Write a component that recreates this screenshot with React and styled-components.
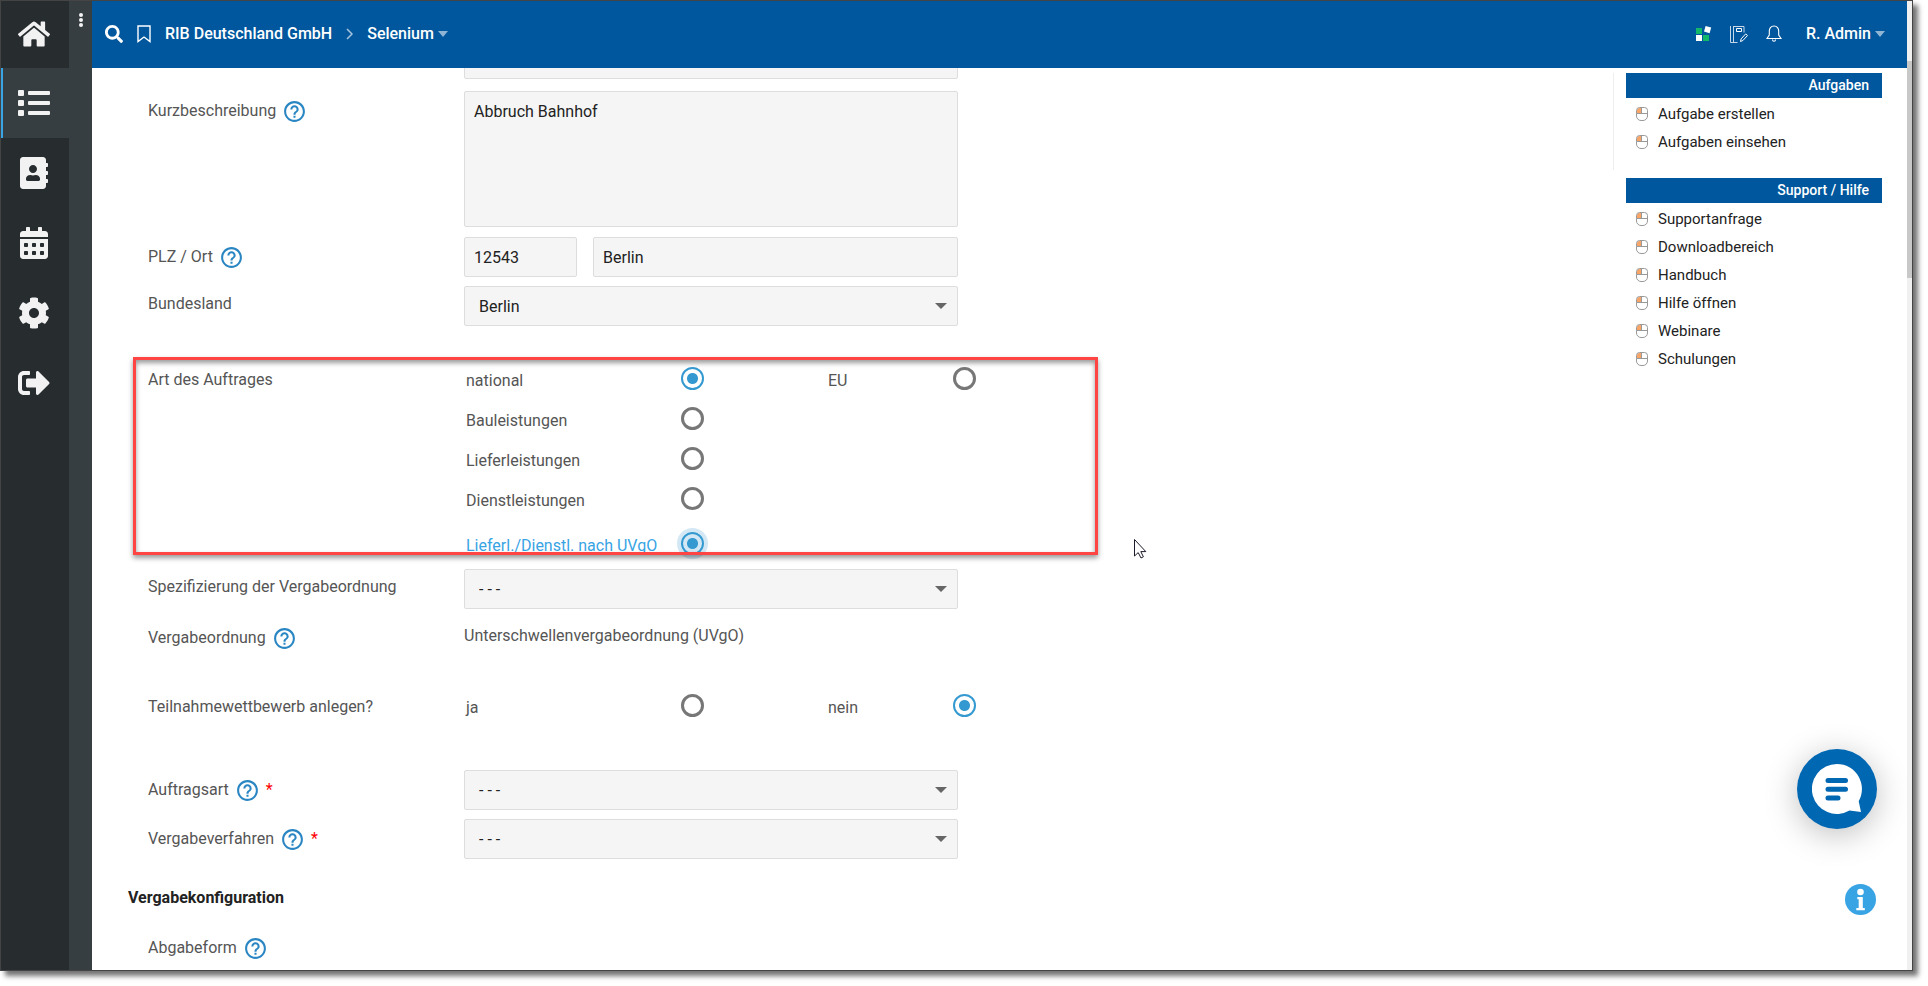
import React from 'react';
import styled, { createGlobalStyle, css } from 'styled-components';
import {
  FaHome, FaList, FaAddressBook, FaCalendarAlt, FaCog, FaSignOutAlt, FaSearch,
} from 'react-icons/fa';
import { MdHelpOutline } from 'react-icons/md';

const GlobalStyle = createGlobalStyle`
  *, *::before, *::after {
    box-sizing: border-box;
  }

  body {
    margin: 0;
    background: #ffffff;
    font-family: Roboto, "Liberation Sans", sans-serif;
    font-size: 16px;
    line-height: 20px;
    color: #555555;
  }

  button, input, select, textarea {
    font: inherit;
    color: inherit;
  }
`;

const Page = styled.div`
  height: 100vh;
  padding: 0 15px 15px 0;
  overflow: hidden;
`;

const Frame = styled.div`
  height: 100%;
  display: flex;
  border: 1px solid #444444;
  box-shadow: 5px 5px 5px 0 rgba(0, 0, 0, 0.55);
  background: #ffffff;
`;

const Sidebar = styled.nav`
  width: 68px;
  flex: none;
  display: flex;
  flex-direction: column;
  background: #272c2f;
`;

const SidebarLink = styled.a`
  height: 70px;
  display: flex;
  align-items: center;
  justify-content: center;
  padding-right: 2px;
  color: #f2f2f2;
  font-size: 32px;
  background: ${props => (props.$active ? '#373e41' : 'transparent')};
  box-shadow: ${props => (props.$active ? 'inset 2px 0 0 #38a4e4' : 'none')};

  &:first-child {
    height: 67px;
    padding-bottom: 2px;
  }
`;

const Strip = styled.div`
  width: 23px;
  flex: none;
  padding-top: 11px;
  text-align: center;
  background: #373e41;
`;

const PlainButton = styled.button`
  display: inline-flex;
  align-items: center;
  padding: 0;
  border: none;
  background: none;
  cursor: pointer;
`;

const Content = styled.div`
  flex: 1;
  min-width: 0;
  display: flex;
  flex-direction: column;
`;

const Header = styled.header`
  height: 67px;
  flex: none;
  display: flex;
  align-items: center;
  justify-content: space-between;
  padding: 0 22px 2px 13px;
  color: #ffffff;
  font-weight: 500;
  background: #00579d;
`;

const HeaderGroup = styled.div`
  display: flex;
  align-items: center;
  gap: ${props => props.$gap};
`;

const HeaderLink = styled.a`
  color: #ffffff;
  text-decoration: none;
`;

const MenuButton = styled(PlainButton)`
  gap: 4px;
  font-weight: 500;

  &::after {
    content: '';
    border: 5px solid transparent;
    border-top: 6px solid #8fb4d4;
    border-bottom: none;
  }
`;

const Body = styled.div`
  flex: 1;
  min-height: 0;
  display: flex;
  justify-content: space-between;
  overflow: hidden;
`;

const Form = styled.form`
  display: flex;
  flex-direction: column;
  margin-top: -29px;
  padding-left: 56px;
`;

const Row = styled.div`
  flex: none;
  display: grid;
  grid-template-columns: 316px 494px;
  margin-top: ${props => props.$space || '9px'};
`;

const labelPadding = {
  help: '0',
  radios: '5px 0 0',
  plain: '0 0 3px',
};

const LabelCell = styled.div`
  height: 40px;
  display: flex;
  align-items: center;
  gap: 6px;
  padding: ${props => labelPadding[props.$kind]};
`;

const LabelText = styled.label`
  padding-bottom: 1px;
`;

const HelpButton = styled(PlainButton)`
  color: #2a86c2;
  font-size: 25px;
`;

const Required = styled.span`
  color: #ff0000;
`;

const fieldStyle = css`
  width: 100%;
  height: 40px;
  border: 1px solid #dddddd;
  border-radius: 2px;
  background: #f5f5f5;
  color: #222222;
  outline: none;
`;

const TextInput = styled.input`
  ${fieldStyle}
  padding: 1px 9px 0;
`;

const TextArea = styled.textarea`
  ${fieldStyle}
  display: block;
  height: 136px;
  padding: 10px 9px;
  resize: none;
`;

const Split = styled.div`
  display: grid;
  grid-template-columns: 113px 1fr;
  gap: 16px;
`;

const SelectBox = styled.div`
  position: relative;

  &::after {
    content: '';
    position: absolute;
    top: 17px;
    right: 11px;
    border: 6px solid transparent;
    border-top-color: #666666;
    border-bottom: none;
    pointer-events: none;
  }
`;

const Select = styled.select`
  ${fieldStyle}
  appearance: none;
  padding: 2px 14px 0;
`;

const Value = styled.div`
  height: 40px;
  padding: 8px 0;
`;

// group that is called out with a red frame
const MarkedGroup = styled.div`
  position: relative;
  margin-top: 31px;
  padding-top: 1px;

  &::after {
    content: '';
    position: absolute;
    top: 0;
    left: -15px;
    width: 965px;
    height: 198px;
    border: 3px solid #ff4444;
    box-shadow: 0 3px 5px rgba(0, 0, 0, 0.4), inset 0 3px 5px rgba(0, 0, 0, 0.4);
    pointer-events: none;
  }
`;

const Radios = styled.div`
  display: grid;
  grid-template-columns: 240px 150px;
  column-gap: 122px;
`;

const RadioLabel = styled.label`
  height: ${props => (props.$focused ? '50px' : '40px')};
  display: flex;
  align-items: center;
  justify-content: space-between;
  padding-left: 2px;
  color: ${props => (props.$focused ? '#38a4e4' : 'inherit')};
`;

const RadioText = styled.span`
  padding-top: 5px;
`;

const Radio = styled.input`
  appearance: none;
  width: 23px;
  height: 23px;
  margin: 0;
  border: 3px solid #777777;
  border-radius: 50%;
  background: #ffffff;

  &:checked {
    border: 2px solid #3399d0;
    background: radial-gradient(circle, #3399d0 5px, ${props => (props.$focused ? '#d3e8f4' : '#ffffff')} 6px);
    box-shadow: ${props => (props.$focused ? '0 0 0 4px #d3e8f4' : 'none')};
  }
`;

const SectionTitle = styled.h2`
  margin: 29px 0 0 -20px;
  font-size: 16px;
  line-height: 20px;
  font-weight: 700;
  color: #222222;
`;

const Aside = styled.aside`
  width: 294px;
  flex: none;
  padding: 5px 25px 0 0;
`;

const AsideBox = styled.section`
  padding-left: 12px;
  border-left: 1px solid ${props => (props.$line ? '#eeeeee' : 'transparent')};
  padding-bottom: ${props => (props.$line ? '14px' : '0')};
  margin-bottom: 8px;
`;

const AsideTitle = styled.h3`
  margin: 0 0 2px;
  padding: 0 13px;
  font-size: 14px;
  line-height: 25px;
  font-weight: 500;
  text-align: right;
  color: #ffffff;
  background: #00579d;
`;

const AsideLink = styled.a`
  height: 28px;
  display: flex;
  align-items: center;
  gap: 10px;
  padding-left: 10px;
  font-size: 15px;
  color: #222222;
  text-decoration: none;
`;

const Scrollbar = styled.div`
  width: 5px;
  flex: none;
  padding-top: 60px;
  background: #f0f0f0;
`;

const Thumb = styled.div`
  height: 217px;
  background: #c8c8c8;
`;

const ChatButton = styled(PlainButton)`
  position: fixed;
  right: 51px;
  bottom: 157px;
  width: 80px;
  height: 80px;
  border-radius: 50%;
  background: #0067b3;
  box-shadow: 0 6px 32px rgba(0, 0, 0, 0.25);
  justify-content: center;
`;

const InfoButton = styled(PlainButton)`
  position: fixed;
  right: 52px;
  bottom: 71px;
`;

const Pointer = styled.svg`
  position: fixed;
  left: 1134px;
  top: 539px;
`;

const DotsIcon = () => (
  <svg width="6" height="18" viewBox="0 0 6 18" fill="#f2f2f2">
    <circle cx="3" cy="3" r="2" />
    <circle cx="3" cy="8" r="2" />
    <circle cx="3" cy="13" r="2" />
  </svg>
);

const BookmarkIcon = () => (
  <svg width="14" height="18" viewBox="0 0 14 18" fill="none" stroke="#ffffff" strokeWidth="1.4">
    <path d="M1 1h12v15.5l-6-4.500-6 4.500z" />
  </svg>
);

const ChevronIcon = () => (
  <svg width="7" height="12" viewBox="0 0 7 12" fill="none" stroke="#a9c5de" strokeWidth="1.5">
    <path d="M1 1l5 5-5 5" />
  </svg>
);

const BlocksIcon = () => (
  <svg width="16" height="16" viewBox="0 0 16 16">
    <path fill="#12b76a" d="M0 2h6v6H0zM7 9h6v6H7z" />
    <path fill="#ffffff" d="M0 9h6v6H0zM9.600 0l5.600 1.600-1.600 5.600L8 5.600z" />
  </svg>
);

const NotesIcon = () => (
  <svg width="18" height="18" viewBox="0 0 18 18" fill="none" stroke="#c5d8e9" strokeWidth="1">
    <path d="M.5 1v16.500h7M3.500 1v16M3.500 1.500h10.500v6" />
    <path stroke="#ffffff" d="M6.500 3.500h5v3h-5zM10.500 16.500l.6-2.600 4.600-5 1.800 1.600-4.600 5z" />
  </svg>
);

const BellIcon = () => (
  <svg width="16" height="18" viewBox="0 0 16 18" fill="none" stroke="#ffffff" strokeWidth="1.1">
    <path d="M8 1C4.800 1 3.300 3.400 3.300 6v4L1 13.500h14L12.700 10V6C12.700 3.400 11.200 1 8 1zM6.500 14.500c0 2.400 3 2.400 3 0" />
  </svg>
);

const MouseIcon = () => (
  <svg width="12" height="14" viewBox="0 0 12 14" fill="none">
    <path fill="#f9a567" d="M1 6V3.500A2.500 2.500 0 0 1 3.500 1H5v5z" />
    <path stroke="#999999" d="M.5 6.500v-3a3 3 0 0 1 3-3h5a3 3 0 0 1 3 3V9a4.500 4.500 0 0 1-4.500 4.500H5A4.500 4.500 0 0 1 .5 9zM.5 6.500h11M5.500.5v6" />
  </svg>
);

const ChatIcon = () => (
  <svg width="50" height="50" viewBox="0 0 50 50">
    <path fill="#ffffff" d="M25 0a25 25 0 1 0 12.500 46.600L49 48l-2.300-10.700A25 25 0 0 0 25 0z" />
    <path stroke="#0067b3" strokeWidth="5" strokeLinecap="round" d="M16 16.500h17.500M16 25.200h17.500M16 34h10" />
  </svg>
);

const InfoIcon = () => (
  <svg width="31" height="31" viewBox="0 0 31 31">
    <circle cx="15.500" cy="15.500" r="15.500" fill="#38a4e4" />
    <circle cx="15.500" cy="8" r="3.300" fill="#ffffff" />
    <path fill="#ffffff" d="M12.300 13h5.500v11h2v2.200h-8.500V24h2.400v-8.800h-1.400z" />
  </svg>
);

const Field = (props) => {
  const {
    id, label, help, required, radios, space, children,
  } = props;
  const plainKind = radios ? 'radios' : 'plain';

  return (
    <Row $space={space}>
      <LabelCell $kind={help ? 'help' : plainKind}>
        <LabelText htmlFor={id}>{label}</LabelText>
        {help && (
          <HelpButton type="button" aria-label={`Hilfe zu ${label}`}><MdHelpOutline /></HelpButton>
        )}
        {required && <Required>*</Required>}
      </LabelCell>
      {children}
    </Row>
  );
};

const Dropdown = ({ id, value }) => (
  <SelectBox>
    <Select id={id} defaultValue={value}>
      <option value={value}>{value}</option>
    </Select>
  </SelectBox>
);

const RadioOption = (props) => {
  const {
    name, label, checked, focused,
  } = props;

  return (
    <RadioLabel $focused={focused}>
      <RadioText>{label}</RadioText>
      <Radio type="radio" name={name} defaultChecked={checked} $focused={focused} />
    </RadioLabel>
  );
};

const navItems = [
  { label: 'Start', Icon: FaHome },
  { label: 'Projekte', Icon: FaList, active: true },
  { label: 'Kontakte', Icon: FaAddressBook },
  { label: 'Kalender', Icon: FaCalendarAlt },
  { label: 'Einstellungen', Icon: FaCog },
  { label: 'Abmelden', Icon: FaSignOutAlt },
];

const tasks = ['Aufgabe erstellen', 'Aufgaben einsehen'];
const support = ['Supportanfrage', 'Downloadbereich', 'Handbuch', 'Hilfe öffnen', 'Webinare', 'Schulungen'];

const App = () => (
  <Page>
    <GlobalStyle />
    <Frame>
      <Sidebar>
        {navItems.map(({ label, Icon, active }) => (
          <SidebarLink key={label} href="#" aria-label={label} $active={active}><Icon /></SidebarLink>
        ))}
      </Sidebar>
      <Strip>
        <PlainButton type="button" aria-label="Menü"><DotsIcon /></PlainButton>
      </Strip>
      <Content>
        <Header>
          <HeaderGroup $gap="14px">
            <PlainButton type="button" aria-label="Suche"><FaSearch size={18} /></PlainButton>
            <PlainButton type="button" aria-label="Merken"><BookmarkIcon /></PlainButton>
            <HeaderLink href="#">RIB Deutschland GmbH</HeaderLink>
            <ChevronIcon />
            <MenuButton type="button">Selenium</MenuButton>
          </HeaderGroup>
          <HeaderGroup $gap="24px">
            <HeaderGroup $gap="18px">
              <PlainButton type="button" aria-label="Apps"><BlocksIcon /></PlainButton>
              <PlainButton type="button" aria-label="Notizen"><NotesIcon /></PlainButton>
              <PlainButton type="button" aria-label="Benachrichtigungen"><BellIcon /></PlainButton>
            </HeaderGroup>
            <MenuButton type="button">R. Admin</MenuButton>
          </HeaderGroup>
        </Header>
        <Body>
          <Form>
            <Row $space="0">
              <span />
              <TextInput type="text" aria-label="Bezeichnung" />
            </Row>
            <Field id="short" label="Kurzbeschreibung" help space="12px">
              <TextArea id="short" defaultValue="Abbruch Bahnhof" />
            </Field>
            <Field id="zip" label="PLZ / Ort" help space="10px">
              <Split>
                <TextInput id="zip" type="text" defaultValue="12543" />
                <TextInput type="text" aria-label="Ort" defaultValue="Berlin" />
              </Split>
            </Field>
            <Field id="state" label="Bundesland">
              <Dropdown id="state" value="Berlin" />
            </Field>
            <MarkedGroup>
              <Field label="Art des Auftrages" radios space="0">
                <Radios>
                  <RadioOption name="scope" label="national" checked />
                  <RadioOption name="scope" label="EU" />
                  <RadioOption name="kind" label="Bauleistungen" />
                  <span />
                  <RadioOption name="kind" label="Lieferleistungen" />
                  <span />
                  <RadioOption name="kind" label="Dienstleistungen" />
                  <span />
                  <RadioOption name="kind" label="Lieferl./Dienstl. nach UVgO" checked focused />
                </Radios>
              </Field>
            </MarkedGroup>
            <Field id="spec" label="Spezifizierung der Vergabeordnung" space="1px">
              <Dropdown id="spec" value="- - -" />
            </Field>
            <Field label="Vergabeordnung" help>
              <Value>Unterschwellenvergabeordnung (UVgO)</Value>
            </Field>
            <Field label="Teilnahmewettbewerb anlegen?" radios space="27px">
              <Radios>
                <RadioOption name="contest" label="ja" />
                <RadioOption name="contest" label="nein" checked />
              </Radios>
            </Field>
            <Field id="type" label="Auftragsart" help required space="45px">
              <Dropdown id="type" value="- - -" />
            </Field>
            <Field id="procedure" label="Vergabeverfahren" help required>
              <Dropdown id="procedure" value="- - -" />
            </Field>
            <SectionTitle>Vergabekonfiguration</SectionTitle>
            <Field label="Abgabeform" help space="20px" />
          </Form>
          <Aside>
            <AsideBox $line>
              <AsideTitle>Aufgaben</AsideTitle>
              {tasks.map(text => (
                <AsideLink key={text} href="#">
                  <MouseIcon />
                  {text}
                </AsideLink>
              ))}
            </AsideBox>
            <AsideBox>
              <AsideTitle>Support / Hilfe</AsideTitle>
              {support.map(text => (
                <AsideLink key={text} href="#">
                  <MouseIcon />
                  {text}
                </AsideLink>
              ))}
            </AsideBox>
          </Aside>
        </Body>
      </Content>
      <Scrollbar><Thumb /></Scrollbar>
    </Frame>
    <ChatButton type="button" aria-label="Chat"><ChatIcon /></ChatButton>
    <InfoButton type="button" aria-label="Information"><InfoIcon /></InfoButton>
    <Pointer width="14" height="20" viewBox="0 0 14 20">
      <path fill="#ffffff" stroke="#1a1a2a" d="M.5.500v16.500l3.700-3.400 2.800 5.400 2.400-1.200-2.600-5.200h5z" />
    </Pointer>
  </Page>
);

export default App;
